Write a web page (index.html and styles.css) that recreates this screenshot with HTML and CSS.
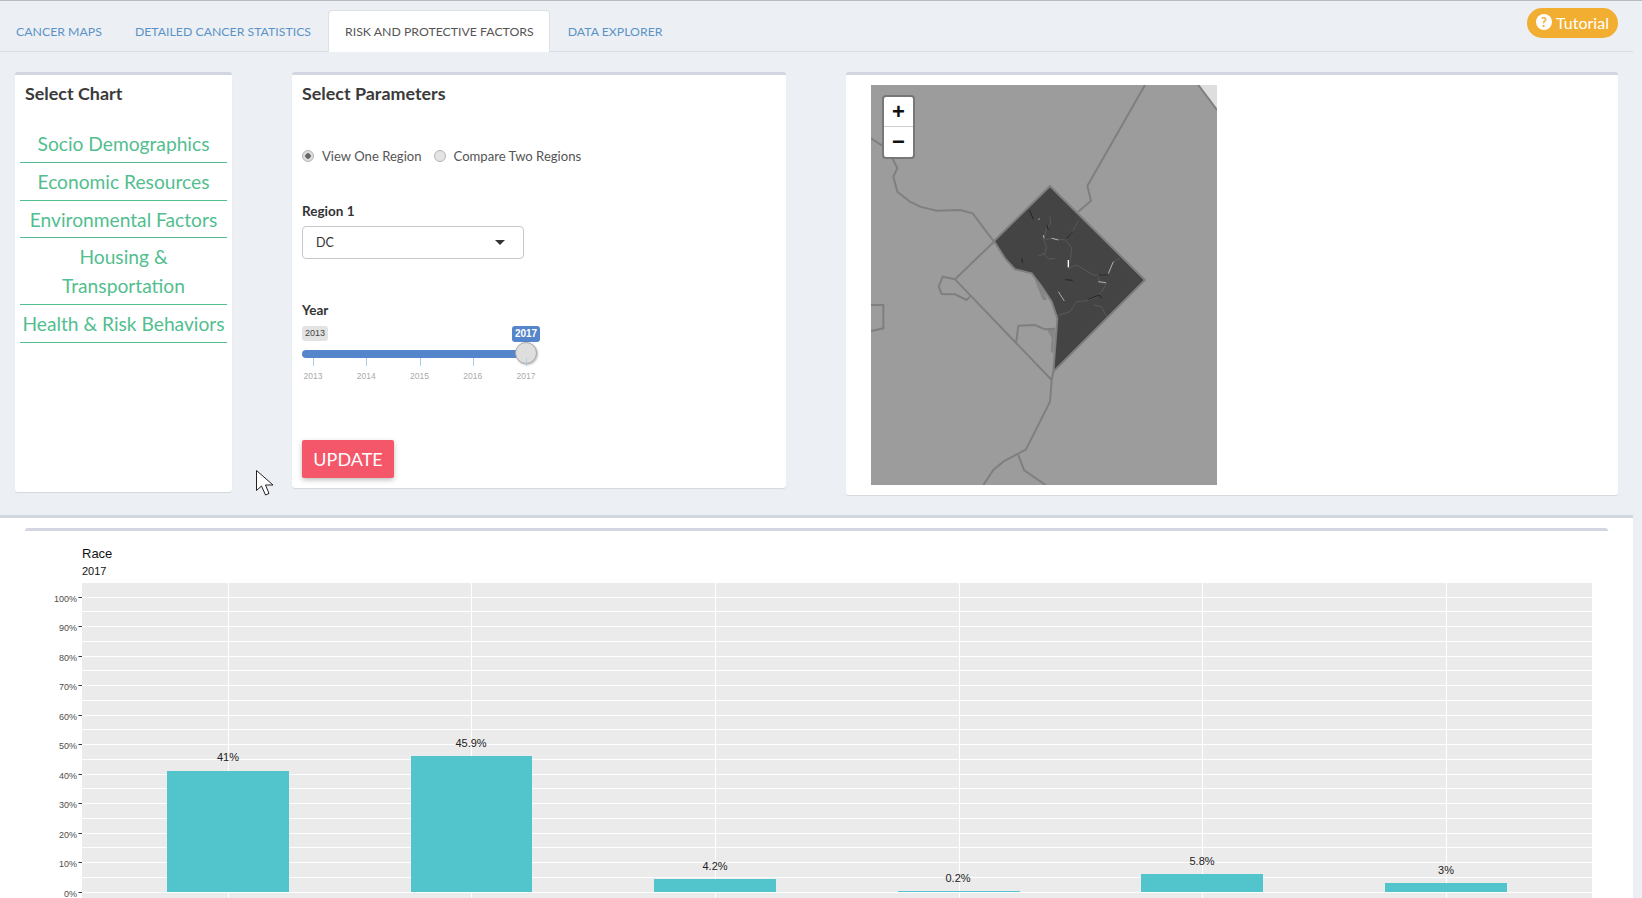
FILE: index.html
```html
<!DOCTYPE html>
<html>
	<head>
		<meta charset="UTF-8">
		<title>Risk and Protective Factors</title>
		<link rel="stylesheet" href="styles.css">
	</head>

	<body>
		<div class="topbar">
			<ul class="tabs">
				<li><a>CANCER MAPS</a></li>
				<li><a>DETAILED CANCER STATISTICS</a></li>
				<li class="active"><a>RISK AND PROTECTIVE FACTORS</a></li>
				<li><a>DATA EXPLORER</a></li>
			</ul>
			<a class="tutorial"><span class="tutorial-icon">?</span>Tutorial</a>
		</div>

		<div class="row">
			<div class="panel panel-chart">
				<h3>Select Chart</h3>
				<ul class="chart-list">
					<li>Socio Demographics</li>
					<li>Economic Resources</li>
					<li>Environmental Factors</li>
					<li>Housing &amp; Transportation</li>
					<li>Health &amp; Risk Behaviors</li>
				</ul>
			</div>

			<div class="panel panel-params">
				<h3>Select Parameters</h3>
				<div class="radios">
					<label><span class="radio checked"></span>View One Region</label>
					<label><span class="radio"></span>Compare Two Regions</label>
				</div>

				<div class="field-label region-label">Region 1</div>
				<div class="select">DC<span class="caret"></span></div>

				<div class="field-label year-label">Year</div>
				<div class="slider">
					<div class="slider-badges">
						<span class="badge-min">2013</span>
						<span class="badge-max">2017</span>
					</div>
					<div class="track"><span class="handle"></span></div>
					<div class="ticks">
						<span>2013</span>
						<span>2014</span>
						<span>2015</span>
						<span>2016</span>
						<span>2017</span>
					</div>
				</div>

				<button class="update">UPDATE</button>
			</div>

			<div class="panel panel-map">
				<div class="map">
					<svg width="346" height="400" viewBox="93 75 1038 1200">
						<rect class="land" x="93" y="75" width="1038" height="1200"/>
						<polygon class="corner" points="1075,75 1131,150 1131,75"/>
						<g class="border">
							<path d="M1075 75L1131 150"/>
							<path d="M915 75L742 378L753 422L715 455"/>
							<path d="M93 235L128 258L160 300L172 325L160 350L172 395L210 425L240 440L290 452L360 450L398 460L462 545"/>
							<path d="M462 545L345 658L635 960"/>
							<path d="M345 658L308 650L296 680L305 702L345 703L380 720L390 710"/>
							<path d="M93 735L130 735L130 805L93 813"/>
							<path d="M528 850L535 797L585 795L615 808L645 806"/>
							<path d="M640 935L635 960L630 1025L558 1168L490 1205L460 1230L430 1275"/>
							<path d="M535 1185L552 1230L617 1275"/>
						</g>
						<path class="patch" d="M582 650L612 695L622 720L608 720L592 680Z"/>
						<path class="patch" d="M622 810L645 810L640 880L632 875L635 835Z"/>
						<path class="dc" d="M630 378L915 660L640 935L652 775L635 725L605 680L575 640L525 628L495 595L462 543Z"/>
						<g transform="translate(420 390)">
							<g class="street">
								<path d="M210 80L212 100L200 115L195 135L190 150L200 170L195 190L175 198"/>
								<path d="M190 190L205 207L225 205"/>
								<path d="M195 150L215 145L258 150L275 175L272 205L265 235"/>
								<path d="M258 150L280 120L295 92"/>
								<path d="M265 235L290 225L340 255L385 255L400 215L420 205"/>
								<path d="M355 260L358 278L380 280L365 305L350 320L320 332L290 335L270 365L232 377"/>
								<path d="M340 345L365 350L380 380"/>
							</g>
							<g class="street-light">
								<path class="thick" d="M265 210L265 232"/>
								<path d="M215 145L235 150"/>
								<path d="M385 250L400 215"/>
								<path d="M235 305L253 333"/>
								<path d="M178 85L176 90"/>
								<path d="M355 275L378 278"/>
								<path d="M190 135L192 145"/>
							</g>
							<g class="street-dark">
								<path d="M148 60L160 88"/>
								<path d="M125 205L128 218"/>
								<path d="M258 148L278 125"/>
								<path d="M255 269L278 271"/>
								<path d="M355 255L385 255"/>
								<path d="M325 328L358 315L365 325"/>
								<path d="M200 105L205 120"/>
							</g>
						</g>
					</svg>
					<div class="zoom-control">
						<a>+</a>
						<a>&minus;</a>
					</div>
				</div>
			</div>
		</div>

		<div class="result">
			<div class="result-box">
				<svg width="1583" height="367" viewBox="25 531 1583 367">
					<text class="plot-title" x="82" y="557.5">Race</text>
					<text class="plot-sub" x="82" y="575">2017</text>

					<rect class="plot-bg" x="82" y="583" width="1510" height="320"/>

					<g class="grid-minor">
						<path d="M82 611.5H1592"/>
						<path d="M82 641.5H1592"/>
						<path d="M82 670.5H1592"/>
						<path d="M82 700.5H1592"/>
						<path d="M82 729.5H1592"/>
						<path d="M82 759.5H1592"/>
						<path d="M82 788.5H1592"/>
						<path d="M82 818.5H1592"/>
						<path d="M82 847.5H1592"/>
						<path d="M82 877.5H1592"/>
					</g>
					<g class="grid-major">
						<path d="M82 597.5H1592"/>
						<path d="M82 626.5H1592"/>
						<path d="M82 656.5H1592"/>
						<path d="M82 685.5H1592"/>
						<path d="M82 715.5H1592"/>
						<path d="M82 744.5H1592"/>
						<path d="M82 774.5H1592"/>
						<path d="M82 803.5H1592"/>
						<path d="M82 833.5H1592"/>
						<path d="M82 862.5H1592"/>
						<path d="M82 892.5H1592"/>
						<path d="M228.5 583V903"/>
						<path d="M471.5 583V903"/>
						<path d="M715.5 583V903"/>
						<path d="M959.5 583V903"/>
						<path d="M1202.5 583V903"/>
						<path d="M1446.5 583V903"/>
					</g>

					<g class="bars">
						<rect x="167" y="771" width="122" height="121"/>
						<rect x="411" y="756" width="121" height="136"/>
						<rect x="654" y="879" width="122" height="13"/>
						<rect x="898" y="891" width="122" height="1"/>
						<rect x="1141" y="874" width="122" height="18"/>
						<rect x="1385" y="883" width="122" height="9"/>
					</g>

					<g class="bar-labels">
						<text x="228" y="761">41%</text>
						<text x="471" y="747">45.9%</text>
						<text x="715" y="870">4.2%</text>
						<text x="958" y="882">0.2%</text>
						<text x="1202" y="865">5.8%</text>
						<text x="1446" y="874">3%</text>
					</g>

					<g class="y-ticks">
						<path d="M78.5 597.5H82"/>
						<path d="M78.5 626.5H82"/>
						<path d="M78.5 656.5H82"/>
						<path d="M78.5 685.5H82"/>
						<path d="M78.5 715.5H82"/>
						<path d="M78.5 744.5H82"/>
						<path d="M78.5 774.5H82"/>
						<path d="M78.5 803.5H82"/>
						<path d="M78.5 833.5H82"/>
						<path d="M78.5 862.5H82"/>
						<path d="M78.5 892.5H82"/>
					</g>
					<g class="y-labels">
						<text x="77" y="601.5">100%</text>
						<text x="77" y="631">90%</text>
						<text x="77" y="660.5">80%</text>
						<text x="77" y="690">70%</text>
						<text x="77" y="719.5">60%</text>
						<text x="77" y="749">50%</text>
						<text x="77" y="778.5">40%</text>
						<text x="77" y="808">30%</text>
						<text x="77" y="837.5">20%</text>
						<text x="77" y="867">10%</text>
						<text x="77" y="896.5">0%</text>
					</g>
				</svg>
			</div>
		</div>

		<svg class="cursor" width="20" height="28" viewBox="0 0 20 28">
			<path d="M1.5 1.5L1.5 21.5L6.5 17L10.5 26L14 24.5L10.5 16L18 16Z"/>
		</svg>
	</body>
</html>
```

FILE: styles.css
```css
*{
	margin: 0;
	padding: 0;
	box-sizing: border-box;
}
html, body{
	height: 898px;
	overflow: hidden;
}
body{
	position: relative;
	background: #ecf0f5;
	border-top: 1px solid #b8bcc2;
	font-family: "Lato", "Noto Sans", sans-serif;
	color: #333;
}
ul{
	list-style: none;
}

/* tabs */
.topbar{
	width: 1633px;
	height: 51px;
	display: flex;
	justify-content: space-between;
	border-bottom: 1px solid #d9dce0;
}
.tabs{
	display: flex;
	padding-top: 9px;
}
.tabs li{
	height: 42px;
	padding: 0 15px 0 16px;
	margin-right: 2px;
	line-height: 44px;
	font-size: 12.3px;
	color: #5b93c7;
	white-space: nowrap;
}
.tabs li.active{
	background: #fff;
	color: #555;
	border: 1px solid #dcdfe3;
	border-bottom: 0;
	border-radius: 4px 4px 0 0;
	line-height: 42px;
}
.tutorial{
	width: 91px;
	height: 30px;
	margin: 7px 15px 0 0;
	padding-bottom: 2px;
	display: flex;
	align-items: center;
	justify-content: center;
	gap: 4px;
	background: #f2ae30;
	border-radius: 15px;
	color: #fff;
	font-size: 16px;
}
.tutorial-icon{
	width: 16px;
	height: 16px;
	border-radius: 50%;
	background: #fff;
	color: #f2ae30;
	font-size: 13px;
	font-weight: bold;
	line-height: 16px;
	text-align: center;
}

/* top row */
.row{
	display: flex;
	align-items: flex-start;
	gap: 60px;
	padding: 20px 0 0 15px;
}
.panel{
	background: #fff;
	border-top: 3px solid #d2d6e0;
	border-radius: 3px;
	box-shadow: 0 1px 1px rgba(0, 0, 0, .1);
}
.panel h3{
	font-size: 17.9px;
	line-height: 24px;
	font-weight: bold;
	color: #3a3a3a;
}
.panel-chart{
	width: 217px;
	height: 420px;
	padding: 6px 5px 0;
}
.panel-chart h3{
	padding-left: 5px;
}
.chart-list{
	margin-top: 20px;
}
.chart-list li{
	padding: 5px 0 3px;
	border-bottom: 1px solid #52be8f;
	color: #52be8f;
	font-size: 19.2px;
	line-height: 28.8px;
	text-align: center;
}
.panel-params{
	width: 494px;
	height: 416px;
	padding: 6px 10px 0;
}
.radios{
	display: flex;
	gap: 12px;
	margin-top: 41px;
	font-size: 13.1px;
	line-height: 20px;
	color: #555;
}
.radios label{
	display: flex;
	align-items: center;
	gap: 8px;
}
.radio{
	width: 12px;
	height: 12px;
	border-radius: 50%;
	background: #e3e3e3;
	border: 1px solid #b5b5b5;
}
.radio.checked{
	background: radial-gradient(circle, #666 0, #666 2.5px, #ddd 3px);
}
.field-label{
	font-size: 13.5px;
	font-weight: bold;
	line-height: 18px;
}
.region-label{
	margin-top: 36px;
}
.select{
	position: relative;
	width: 222px;
	height: 33px;
	margin-top: 6px;
	padding-left: 13px;
	border: 1px solid #c8c8c8;
	border-radius: 4px;
	font-size: 12.5px;
	line-height: 32px;
}
.caret{
	position: absolute;
	right: 18px;
	top: 13px;
	border-top: 5px solid #333;
	border-left: 5px solid transparent;
	border-right: 5px solid transparent;
}
.year-label{
	margin-top: 42px;
}
.slider{
	width: 240px;
	margin-top: 7px;
	font-family: "Liberation Sans", sans-serif;
}
.slider-badges{
	display: flex;
	justify-content: space-between;
	width: 238px;
	height: 17px;
	font-size: 9px;
}
.badge-min{
	width: 26px;
	height: 15px;
	background: #e3e3e3;
	border-radius: 3px;
	text-align: center;
	line-height: 15px;
	color: #444;
}
.badge-max{
	width: 28px;
	height: 16px;
	background: #5585ca;
	border-radius: 3px;
	text-align: center;
	line-height: 16px;
	color: #fff;
	font-weight: bold;
	font-size: 10px;
}
.track{
	position: relative;
	width: 224px;
	height: 8px;
	margin-top: 7px;
	background: #5585ca;
	border-radius: 4px 0 0 4px;
}
.handle{
	position: absolute;
	right: -11px;
	top: -8px;
	width: 22px;
	height: 22px;
	background: #dedede;
	border: 1px solid #aaa;
	border-radius: 50%;
	box-shadow: 1px 1px 2px rgba(0, 0, 0, .25);
}
.ticks{
	display: flex;
	justify-content: space-between;
	width: 241px;
	margin-left: -3px;
	padding-top: 13px;
	font-size: 8.5px;
	line-height: 10px;
	color: #aaa;
}
.ticks span{
	position: relative;
	width: 26px;
	margin: 0 1px;
	text-align: center;
}
.ticks span:before{
	content: "";
	position: absolute;
	left: 13px;
	top: -13px;
	width: 1px;
	height: 8px;
	background: #a6d2e4;
}
.update{
	display: block;
	width: 92px;
	height: 38px;
	margin-top: 59px;
	background: #f4566a;
	border: 0;
	border-radius: 2px;
	box-shadow: 0 2px 5px rgba(0, 0, 0, .25);
	color: #fff;
	font-family: "Lato", sans-serif;
	font-size: 18px;
}
.panel-map{
	width: 772px;
	height: 423px;
	padding: 10px 0 0 25px;
}
.map{
	position: relative;
	width: 346px;
	height: 400px;
}
.map svg{
	display: block;
}
.land{
	fill: #9c9c9c;
}
.corner{
	fill: #dedede;
}
.border path{
	fill: none;
	stroke: #7f7f7f;
	stroke-width: 6;
}
.patch{
	fill: #868686;
}
.dc{
	fill: #444;
	stroke: #808080;
	stroke-width: 6;
}
.street path, .street-light path, .street-dark path{
	fill: none;
}
.street path{
	stroke: #6d6d6d;
	stroke-width: 1.5;
}
.street-light path{
	stroke: #ddd;
	stroke-width: 2;
}
.street-light path.thick{
	stroke: #fff;
	stroke-width: 4;
}
.street-dark path{
	stroke: #241a1e;
	stroke-width: 2.5;
}
.zoom-control{
	position: absolute;
	left: 11px;
	top: 10px;
	width: 33px;
	background: #fff;
	border: 2px solid #777;
	border-radius: 4px;
	font-family: "Liberation Sans", sans-serif;
	font-weight: bold;
	font-size: 22px;
	color: #111;
	text-align: center;
}
.zoom-control a{
	display: block;
	height: 30px;
	line-height: 29px;
}
.zoom-control a:first-child{
	border-bottom: 1px solid #ccc;
}

/* lower chart */
.result{
	width: 1633px;
	height: 400px;
	margin-top: 20px;
	padding: 10px 25px 0;
	background: #fff;
	border-top: 3px solid #d2d6e0;
}
.result-box{
	width: 1583px;
	border-top: 3px solid #d2d6e0;
	border-radius: 3px;
}
.result-box svg{
	display: block;
}
.result-box text{
	font-family: "Liberation Sans", sans-serif;
}
.plot-title{
	font-size: 13px;
	fill: #111;
}
.plot-sub{
	font-size: 11px;
	fill: #111;
}
.plot-bg{
	fill: #ebebeb;
}
.grid-minor path{
	stroke: #fff;
	stroke-width: 1;
	fill: none;
}
.grid-major path{
	stroke: #fff;
	stroke-width: 1;
	fill: none;
}
.bars rect{
	fill: #52c4cc;
}
.bar-labels text{
	font-size: 11px;
	fill: #222;
	text-anchor: middle;
}
.y-ticks path{
	stroke: #333;
	stroke-width: 1;
}
.y-labels text{
	font-size: 9px;
	fill: #4d4d4d;
	text-anchor: end;
}

/* mouse pointer caught in the picture */
.cursor{
	position: absolute;
	left: 255px;
	top: 468px;
}
.cursor path{
	fill: #fff;
	stroke: #222;
	stroke-width: 1;
}
```
